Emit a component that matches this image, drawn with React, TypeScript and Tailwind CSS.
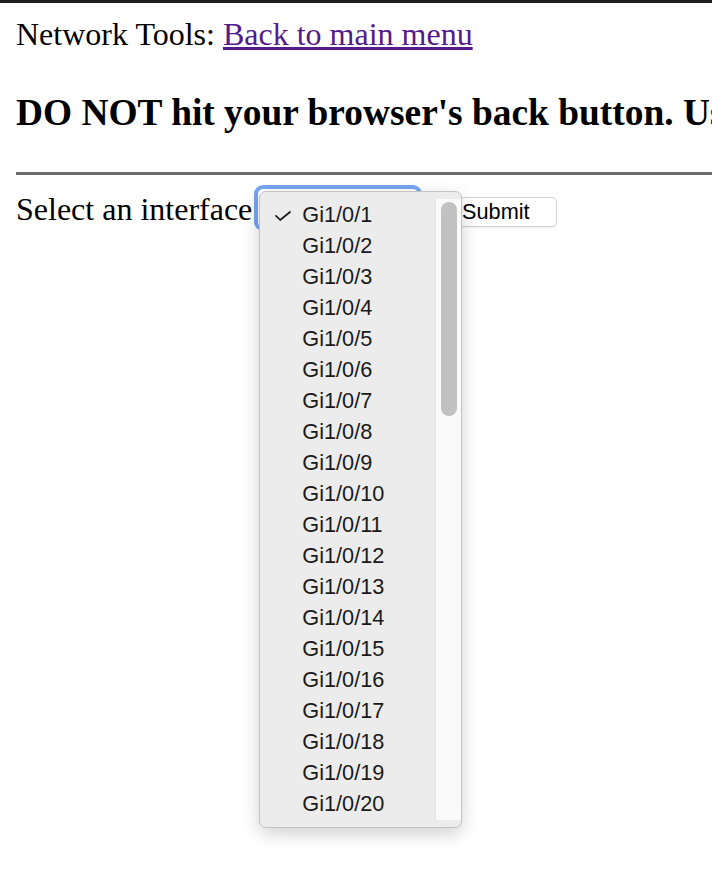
const ports = Array.from({ length: 20 }, (_, i) => `Gi1/0/${i + 1}`);

function Check() {
  return (
    <svg width="16" height="10" viewBox="0 0 16 10" className="absolute left-[15px] top-[12px]">
      <path d="M1 4.8 L5.2 9 L15 1" fill="none" stroke="#1a1a1a" strokeWidth="1.7" strokeLinecap="round" strokeLinejoin="round" />
    </svg>
  );
}

function Dropdown() {
  return (
    <div className="absolute left-[1px] top-[2px] z-10 flex h-[637px] w-[203px] rounded-[7px] border border-[#c3c3c3] bg-[#ececec] shadow-[0_6px_18px_rgba(0,0,0,0.18)] font-['Liberation_Sans',Arial,sans-serif] text-[21.7px] text-[#1a1a1a]">
      <ul className="flex-1 overflow-hidden pt-[7px]">
        {ports.map((p, i) => (
          <li key={p} className="relative h-[31px] pl-[42px] leading-[31px]">
            {i === 0 && <Check />}
            {p}
          </li>
        ))}
      </ul>
      <div className="my-[7px] w-[26px] border-l border-[#e3e3e3] bg-[#fafafa] pl-[5px] pr-[4px]">
        <div className="mt-[3px] h-[214px] rounded-full bg-[#c1c1c1]" />
      </div>
    </div>
  );
}

export default function App() {
  return (
    <div className="relative h-[886px] w-[712px] overflow-hidden bg-white font-['Liberation_Serif','Times_New_Roman',serif] text-black">
      <div className="h-[3px] bg-[#1e1e1e]" />
      <div className="pl-4">
        <p className="mt-[13px] text-[32px] leading-[36px]">
          Network Tools:{" "}
          <a href="#" className="text-[#551a8b] underline">
            Back to main menu
          </a>
        </p>
        <h3 className="mt-[40px] whitespace-nowrap text-[37.4px] font-bold leading-[42px]">
          DO NOT hit your browser's back button. Use the links on this page to navigate.
        </h3>
        <div className="mt-[38px] h-[3px] bg-[#6b6b6b]" />
        <div className="mt-[16px] flex items-start text-[32px] leading-[36px]">
          <span className="whitespace-nowrap">Select an interface</span>
          <div className="relative ml-[2px] mt-[-6px] h-[46px] w-[168px] shrink-0 rounded-[9px] border-[4px] border-[#76a5ef] bg-white">
            <Dropdown />
          </div>
          <button className="ml-[12px] mt-[6px] h-[30px] w-[123px] shrink-0 rounded-[5px] border border-[#d2d2d2] bg-white font-['Liberation_Sans',Arial,sans-serif] text-[21.7px] leading-[28px] text-black shadow-[0_1px_1px_rgba(0,0,0,0.06)]">
            Submit
          </button>
        </div>
      </div>
    </div>
  );
}
